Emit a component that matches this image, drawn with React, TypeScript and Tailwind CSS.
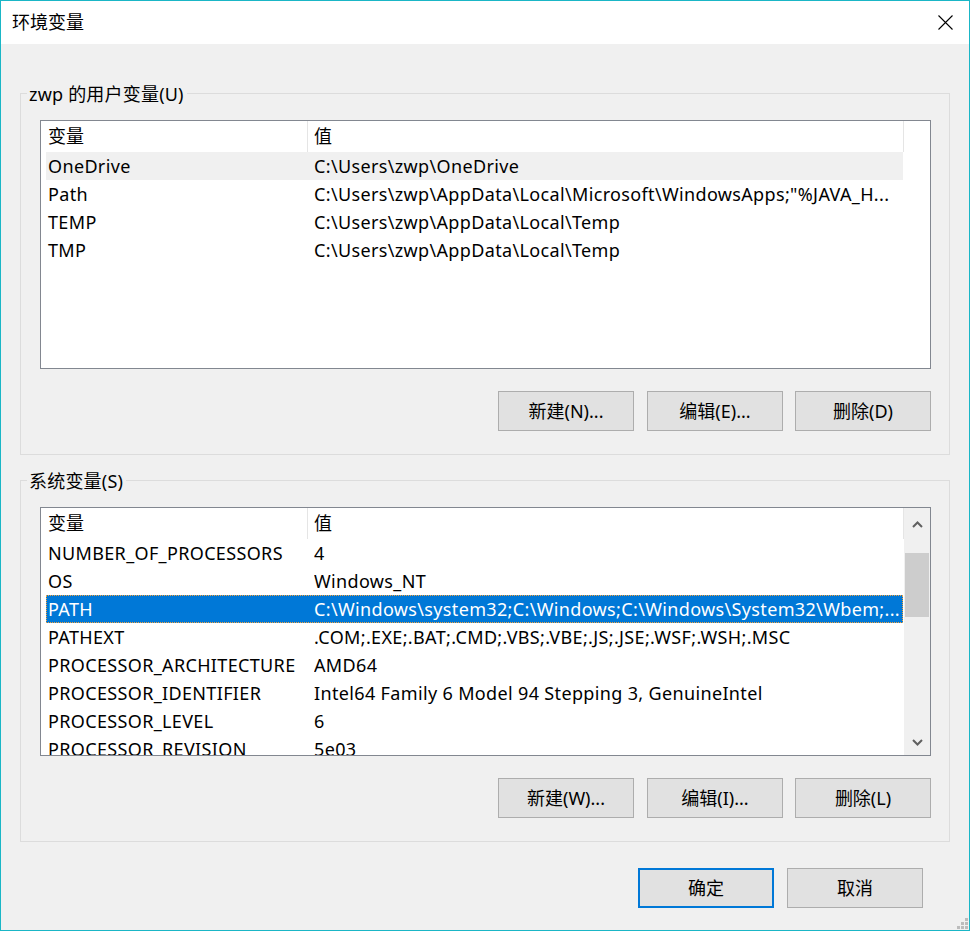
import React from "react";

type EnvVar = { name: string; value: string };

const userVars: EnvVar[] = [
  { name: "OneDrive", value: String.raw`C:\Users\zwp\OneDrive` },
  { name: "Path", value: String.raw`C:\Users\zwp\AppData\Local\Microsoft\WindowsApps;"%JAVA_H...` },
  { name: "TEMP", value: String.raw`C:\Users\zwp\AppData\Local\Temp` },
  { name: "TMP", value: String.raw`C:\Users\zwp\AppData\Local\Temp` },
];

const systemVars: EnvVar[] = [
  { name: "NUMBER_OF_PROCESSORS", value: "4" },
  { name: "OS", value: "Windows_NT" },
  { name: "PATH", value: String.raw`C:\Windows\system32;C:\Windows;C:\Windows\System32\Wbem;...` },
  { name: "PATHEXT", value: ".COM;.EXE;.BAT;.CMD;.VBS;.VBE;.JS;.JSE;.WSF;.WSH;.MSC" },
  { name: "PROCESSOR_ARCHITECTURE", value: "AMD64" },
  { name: "PROCESSOR_IDENTIFIER", value: "Intel64 Family 6 Model 94 Stepping 3, GenuineIntel" },
  { name: "PROCESSOR_LEVEL", value: "6" },
  { name: "PROCESSOR_REVISION", value: "5e03" },
];

function Chevron({ down = false }: { down?: boolean }) {
  return (
    <svg width="11" height="7" viewBox="0 0 11 7" className={down ? "rotate-180" : ""}>
      <polyline points="1,6 5.5,1.5 10,6" fill="none" stroke="#606060" strokeWidth="2" />
    </svg>
  );
}

function Button({ label, primary = false, className = "" }: { label: string; primary?: boolean; className?: string }) {
  return (
    <button
      type="button"
      className={
        "flex h-[40px] w-[136px] items-center justify-center bg-[#e1e1e1] " +
        (primary ? "border-2 border-[#0078d7] " : "border border-[#adadad] ") +
        className
      }
    >
      {label}
    </button>
  );
}

function VarList({
  rows,
  hovered,
  selected,
  scrollbar = false,
}: {
  rows: EnvVar[];
  hovered?: number;
  selected?: number;
  scrollbar?: boolean;
}) {
  return (
    <div className="flex h-[249px] w-full overflow-hidden border border-[#828790] bg-white">
      <div className="flex w-[863px] flex-col">
        <div className="flex h-[31px] shrink-0">
          <div className="flex w-[267px] items-center border-r border-[#e5e5e5] pl-[7px]">变量</div>
          <div className="flex w-[596px] items-center border-r border-[#e5e5e5] pl-[6px]">值</div>
        </div>
        {rows.map((row, i) => {
          let look = "";
          if (i === hovered) look = "bg-[#f0f0f0]";
          if (i === selected)
            look = "bg-[#0078d7] text-white outline-1 outline-dotted outline-[#f5a33c] -outline-offset-1";
          return (
            <div key={row.name} className={"ml-[5px] flex h-[28px] w-[857px] shrink-0 items-center " + look}>
              <div className="w-[268px] shrink-0 whitespace-nowrap pl-[2px] tracking-[0.35px]">{row.name}</div>
              <div className="flex-1 overflow-hidden whitespace-nowrap tracking-[0.35px]">{row.value}</div>
            </div>
          );
        })}
      </div>
      {scrollbar && (
        <div className="flex w-[26px] flex-col bg-[#f0f0f0]">
          <div className="flex h-[32px] items-center justify-center">
            <Chevron />
          </div>
          <div className="mx-[1px] mt-[13px] h-[64px] bg-[#cdcdcd]" />
          <div className="flex-1" />
          <div className="flex h-[26px] items-center justify-center">
            <Chevron down />
          </div>
        </div>
      )}
    </div>
  );
}

function GroupBox({ title, children }: { title: string; children: React.ReactNode }) {
  return (
    <div className="relative border border-[#dcdcdc] pb-[23px] pl-[19px] pr-[18px] pt-[26px]">
      <div className="absolute -top-[12px] left-[6px] bg-[#f0f0f0] pl-[2px] pr-[3px] leading-[24px] tracking-[0.2px]">
        {title}
      </div>
      {children}
    </div>
  );
}

export default function App() {
  return (
    <div className="flex h-[931px] w-[970px] flex-col overflow-hidden border border-[#1ab6c6] bg-[#f0f0f0] font-['Noto_Sans','Noto_Sans_CJK_SC',sans-serif] text-[18px] text-black">
      <div className="flex h-[43px] shrink-0 items-center justify-between bg-white pl-[11px] pr-[16px]">
        <span>环境变量</span>
        <svg width="15" height="15" viewBox="0 0 15 15">
          <path d="M0.5 0.5 L14.5 14.5 M14.5 0.5 L0.5 14.5" stroke="#000" strokeWidth="1.1" fill="none" />
        </svg>
      </div>

      <div className="flex flex-col px-[19px] pt-[49px]">
        <GroupBox title="zwp 的用户变量(U)">
          <VarList rows={userVars} hovered={0} />
          <div className="mt-[22px] flex justify-end">
            <Button label="新建(N)..." />
            <Button label="编辑(E)..." className="ml-[13px]" />
            <Button label="删除(D)" className="ml-[12px]" />
          </div>
        </GroupBox>

        <div className="mt-[25px]">
          <GroupBox title="系统变量(S)">
            <VarList rows={systemVars} selected={2} scrollbar />
            <div className="mt-[22px] flex justify-end">
              <Button label="新建(W)..." />
              <Button label="编辑(I)..." className="ml-[13px]" />
              <Button label="删除(L)" className="ml-[12px]" />
            </div>
          </GroupBox>
        </div>

        <div className="mt-[26px] flex justify-end pr-[27px]">
          <Button label="确定" primary />
          <Button label="取消" className="ml-[13px]" />
        </div>
      </div>

      <div className="flex flex-1 items-end justify-end pb-[1px] pr-[1px]">
        <svg width="11" height="11" viewBox="0 0 11 11">
          <rect x="8" y="0" width="3" height="3" fill="#bcbcbc" />
          <rect x="4" y="4" width="3" height="3" fill="#bcbcbc" />
          <rect x="8" y="4" width="3" height="3" fill="#bcbcbc" />
          <rect x="0" y="8" width="3" height="3" fill="#bcbcbc" />
          <rect x="4" y="8" width="3" height="3" fill="#bcbcbc" />
          <rect x="8" y="8" width="3" height="3" fill="#bcbcbc" />
        </svg>
      </div>
    </div>
  );
}
